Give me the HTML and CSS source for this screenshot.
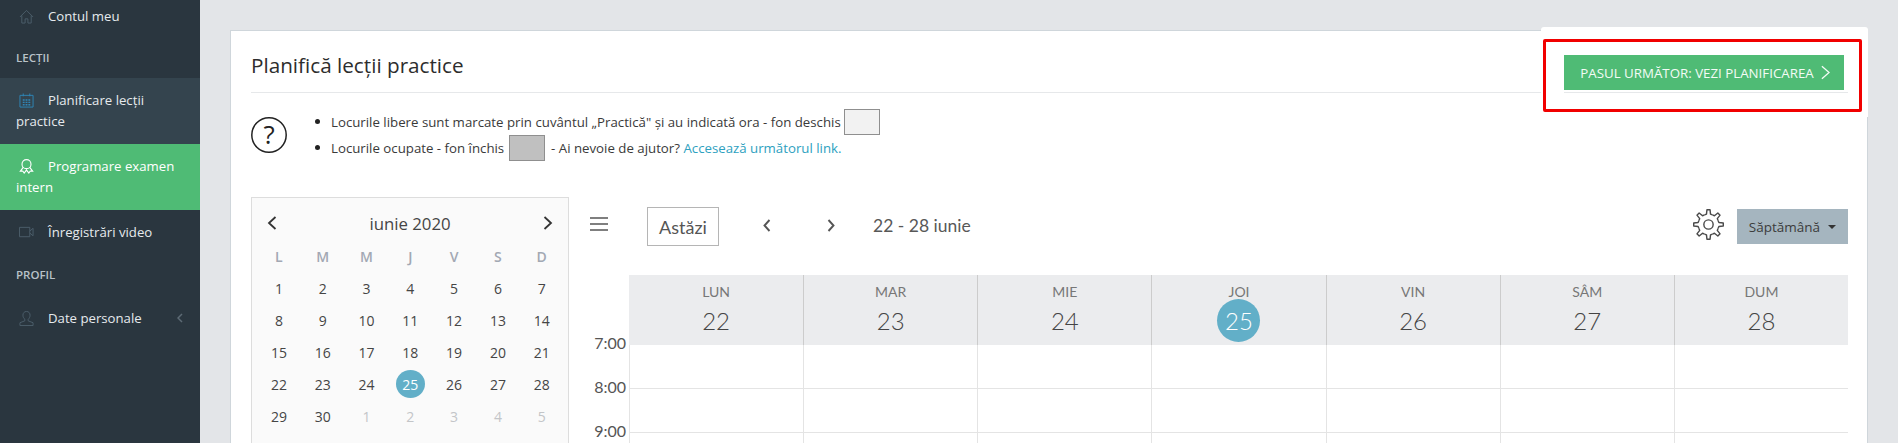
FILE: index.html
```html
<!DOCTYPE html>
<html lang="ro">
<head>
<meta charset="utf-8">
<title>Planifică lecții practice</title>
<link rel="stylesheet" href="styles.css">
</head>
<body>
<div class="app">
  <aside class="sidebar">
    <a class="nav-item first"><svg class="nav-icon dim" viewBox="0 0 16 16"><path d="M1 8.500 8 1.500l7 7M3 7v8h3.500v-4.500h3V15H13V7"/></svg>Contul meu</a>
    <div class="nav-heading">LECȚII</div>
    <a class="nav-item current"><svg class="nav-icon blue" viewBox="0 0 16 16"><path d="M1 2.500h14v12.500H1zM4.500 .5v3M11.500 .5v3"/><path class="dots" d="M4 7.500h2M7 7.500h2M10 7.500h2M4 10h2M7 10h2M10 10h2M4 12.500h2M7 12.500h2M10 12.500h2"/></svg>Planificare lecții practice</a>
    <a class="nav-item active"><svg class="nav-icon white" viewBox="0 0 16 16"><circle cx="8" cy="5.500" r="4.800"/><path d="M4.500 9 1.500 13l2.500-.2L5.500 15 7.500 12.500 8 11.500l.5 1L10.500 15l1.500-2.200 2.500.2-3-4"/></svg>Programare examen intern</a>
    <a class="nav-item"><svg class="nav-icon dim" viewBox="0 0 16 16"><path d="M.5 2.500h11v10H.5zM11.500 6.500l3.500-3v8l-3.500-3"/></svg>Înregistrări video</a>
    <div class="nav-heading profile">PROFIL</div>
    <a class="nav-item expand"><svg class="nav-icon dim" viewBox="0 0 16 16"><path d="M8 .5c2.500 0 3.800 1.800 3.800 4 0 2-1 3.500-2 4.300v1.700L15 12.500v3H1v-3l5.200-2V8.800c-1-.8-2-2.300-2-4.300 0-2.200 1.300-4 3.800-4z"/></svg>Date personale<svg class="nav-chevron" viewBox="0 0 6 10"><path d="M5 1 1 5l4 4"/></svg></a>
  </aside>
  <main class="main">
    <section class="card">
      <header class="card-head"><h1>Planifică lecții practice</h1></header>
      <div class="help">
        <svg class="help-icon" viewBox="0 0 36 36"><circle cx="18" cy="18" r="17.200"/><text x="18" y="27" text-anchor="middle">?</text></svg>
        <ul class="help-list">
          <li>Locurile libere sunt marcate prin cuvântul „Practică" și au indicată ora - fon deschis <span class="swatch light"></span></li>
          <li>Locurile ocupate - fon închis <span class="swatch dark"></span> - Ai nevoie de ajutor? <a class="help-link">Accesează următorul link.</a></li>
        </ul>
      </div>
      <div class="planner">
        <div class="mini">
          <div class="mini-head">
            <svg class="mini-arrow" viewBox="0 0 10 16"><path d="M8.500 2 2 8l6.500 6"/></svg>
            <span>iunie 2020</span>
            <svg class="mini-arrow" viewBox="0 0 10 16"><path d="M1.500 2 8 8l-6.500 6"/></svg>
          </div>
          <div class="mini-grid">
            <b>L</b><b>M</b><b>M</b><b>J</b><b>V</b><b>S</b><b>D</b>
            <span>1</span><span>2</span><span>3</span><span>4</span><span>5</span><span>6</span><span>7</span>
            <span>8</span><span>9</span><span>10</span><span>11</span><span>12</span><span>13</span><span>14</span>
            <span>15</span><span>16</span><span>17</span><span>18</span><span>19</span><span>20</span><span>21</span>
            <span>22</span><span>23</span><span>24</span><span><i class="today">25</i></span><span>26</span><span>27</span><span>28</span>
            <span>29</span><span>30</span><span class="off">1</span><span class="off">2</span><span class="off">3</span><span class="off">4</span><span class="off">5</span>
          </div>
        </div>
        <div class="cal">
          <div class="toolbar">
            <svg class="burger" viewBox="0 0 18 14"><path d="M0 1h18M0 7h18M0 13h18"/></svg>
            <button class="today-btn">Astăzi</button>
            <svg class="tool-arrow prev" viewBox="0 0 8 13"><path d="M6.500 1 1.500 6.500l5 5.500"/></svg>
            <svg class="tool-arrow next" viewBox="0 0 8 13"><path d="M1.500 1l5 5.500-5 5.500"/></svg>
            <span class="range">22 - 28 iunie</span>
            <svg class="gear" viewBox="0 0 24 24">
              <defs><path id="tooth" d="M-3.060-7.390-1.560-8.050-1.200-11.440H1.200L1.560-8.050 3.060-7.390"/></defs>
              <g transform="translate(12 12)">
                <use href="#tooth"/>
                <use href="#tooth" transform="rotate(45)"/>
                <use href="#tooth" transform="rotate(90)"/>
                <use href="#tooth" transform="rotate(135)"/>
                <use href="#tooth" transform="rotate(180)"/>
                <use href="#tooth" transform="rotate(225)"/>
                <use href="#tooth" transform="rotate(270)"/>
                <use href="#tooth" transform="rotate(315)"/>
                <circle r="3.600"/>
              </g>
            </svg>
            <button class="view-btn">Săptămână<i class="caret"></i></button>
          </div>
          <div class="week">
            <div class="gutter"><div>7:00</div><div>8:00</div><div>9:00</div></div>
            <div class="days">
              <div class="day"><small>LUN</small><strong>22</strong></div>
              <div class="day"><small>MAR</small><strong>23</strong></div>
              <div class="day"><small>MIE</small><strong>24</strong></div>
              <div class="day"><small>JOI</small><strong class="now">25</strong></div>
              <div class="day"><small>VIN</small><strong>26</strong></div>
              <div class="day"><small>SÂM</small><strong>27</strong></div>
              <div class="day"><small>DUM</small><strong>28</strong></div>
              <i></i><i></i><i></i><i></i><i></i><i></i><i></i>
              <i></i><i></i><i></i><i></i><i></i><i></i><i></i>
              <i></i><i></i><i></i><i></i><i></i><i></i><i></i>
            </div>
          </div>
        </div>
      </div>
    </section>
  </main>
</div>
<div class="popover"></div>
<div class="highlight"></div>
<button class="next-step">PASUL URMĂTOR: VEZI PLANIFICAREA<svg viewBox="0 0 10 16"><path d="M1 1l8 7-8 7"/></svg></button>
</body>
</html>
```
FILE: styles.css
```css
* { box-sizing: border-box; }
html, body { margin: 0; height: 443px; overflow: hidden; }
body { font-family: "Open Sans", sans-serif; color: #333; background: #e3e5e8; position: relative; }
.app { display: flex; height: 443px; }
.sidebar { width: 200px; flex: none; background: #2a363f; color: #e6eaed; font-size: 13.200px; line-height: 21px; }
.nav-item { display: block; padding: 12px 16px; position: relative; }
.nav-item.first { padding-top: 6px; padding-bottom: 21px; }
.nav-item.current { background: #34444e; }
.nav-item.active { background: #4fbb75; color: #fff; }
.nav-item.expand { padding-top: 23px; }
.nav-icon { width: 15px; height: 15px; margin: 0 14px 0 3px; vertical-align: -3px; fill: none; stroke: #4d5f6c; stroke-width: 1; }
.nav-icon.blue { stroke: #2f86b8; }
.nav-icon.white { stroke: #fff; stroke-width: 1.200; }
.nav-icon .dots { stroke-width: 1.500; }
.nav-chevron { position: absolute; right: 17px; top: 28px; width: 6px; height: 10px; fill: none; stroke: #5d6b75; stroke-width: 1.500; }
.nav-heading { font-size: 11.500px; font-weight: 600; color: #b9c2c8; padding: 0 16px 10px; line-height: 20px; }
.nav-heading.profile { padding-top: 10px; padding-bottom: 0; }
.main { flex: 1; padding: 30px 30px 0; min-width: 0; }
.card { background: #fff; border: 1px solid #cfd6db; border-bottom: 0; height: 413px; padding: 0 19px 0 20px; overflow: hidden; }
.card-head { height: 62px; border-bottom: 1px solid #e6e8ea; display: flex; align-items: center; padding-top: 6px; }
.card-head h1 { margin: 0; font-size: 20.700px; font-weight: 500; color: #2d2d2d; line-height: 28px; }
.help { display: flex; align-items: center; height: 52px; margin-top: 16px; }
.help-icon { width: 36px; height: 36px; flex: none; fill: none; stroke: #222; stroke-width: 1.500; }
.help-icon text { font-family: "Open Sans", sans-serif; font-size: 26px; fill: #222; stroke: none; }
.help-list { margin: 0; padding: 0 0 0 44px; list-style: none; font-size: 13.250px; line-height: 26px; color: #3a3a3a; }
.help-list li { height: 26px; display: flex; align-items: center; white-space: pre; position: relative; }
.help-list li::before { content: ""; position: absolute; left: -16px; top: 10px; width: 5px; height: 5px; border-radius: 50%; background: #222; }
.help-link { color: #2ea1c0; }
.swatch { display: inline-block; width: 36px; height: 26px; border: 1px solid #8f8f8f; }
.swatch.light { background: #f2f2f2; }
.swatch.dark { background: #c0c0c0; margin: 0 3px 0 1px; }
.planner { display: flex; margin-top: 36px; }
.mini { width: 318px; flex: none; height: 260px; background: #fafafa; border: 1px solid #dddddd; padding: 10px 5px 0; }
.mini-head { display: flex; align-items: center; justify-content: space-between; height: 30px; padding: 0 10px 0 10px; font-size: 16.800px; color: #454545; }
.mini-arrow { width: 10px; height: 16px; fill: none; stroke: #333; stroke-width: 1.800; }
.mini-grid { display: grid; grid-template-columns: repeat(7, 43.800px); grid-auto-rows: 32px; margin: 2px 0 0; font-size: 14px; color: #454545; }
.mini-grid > * { display: flex; align-items: center; justify-content: center; font-weight: 400; }
.mini-grid b { font-weight: 600; color: #a2a8b3; }
.mini-grid .off { color: #c3c5c8; }
.today { font-style: normal; width: 29px; height: 28px; border-radius: 50%; background: #62afc8; color: #fff; display: flex; align-items: center; justify-content: center; }
.cal { flex: 1; min-width: 0; margin-left: 2px; font-family: Lato, sans-serif; }
.toolbar { display: flex; align-items: center; height: 39px; margin-top: 10px; margin-left: 19px; position: relative; }
.burger { width: 18px; height: 14px; fill: none; stroke: #555; stroke-width: 1.300; margin-top: -6px; }
.today-btn { width: 72px; height: 39px; margin-left: 39px; background: #fff; border: 1px solid #b5b5b5; border-radius: 0; font: 18px Lato, sans-serif; color: #555; padding: 0; }
.tool-arrow { width: 8px; height: 13px; fill: none; stroke: #555; stroke-width: 1.900; margin-top: -3px; }
.tool-arrow.prev { margin-left: 44px; }
.tool-arrow.next { margin-left: 56px; }
.range { margin-left: 38px; font-size: 17.500px; color: #585858; margin-top: -2px; }
.gear { width: 31px; height: 31px; margin-left: auto; fill: none; stroke: #4a4a4a; stroke-width: 1.100; stroke-linejoin: round; margin-top: -5px; }
.view-btn { width: 111px; height: 35px; margin-left: 13px; background: #a5b5bf; border: 0; font: 13.500px "Open Sans", sans-serif; color: #3c3c3c; padding: 0; display: flex; align-items: center; justify-content: center; }
.caret { width: 0; height: 0; margin-left: 8px; border: 4px solid transparent; border-top-color: #333; border-bottom: 0; }
.week { display: flex; margin-top: 29px; }
.gutter { width: 58px; flex: none; padding-top: 57px; padding-right: 3px; text-align: right; font-size: 16px; color: #555; }
.gutter div { height: 44px; line-height: 22px; }
.days { flex: 1; display: grid; grid-template-columns: repeat(7, 1fr); grid-template-rows: 70px 44px 44px auto; height: 168px; }
.day { background: #ebecee; text-align: center; color: #777; border-left: 1px solid #ccc; display: flex; flex-direction: column; align-items: center; position: relative; }
.day:first-child { border-left: 0; }
.day small { font-size: 14px; line-height: 18px; margin-top: 8px; }
.day strong { font-weight: 300; font-size: 24px; line-height: 30px; margin-top: 5px; color: #444; }
.day strong.now { position: absolute; top: 24px; width: 43px; height: 43px; line-height: 43px; border-radius: 50%; background: #62afc8; color: #fff; margin: 0; }
.days > i { border-left: 1px solid #e4e4e4; border-bottom: 1px solid #e4e4e4; }
.days > i:nth-last-child(-n+7) { border-bottom: 0; }
.popover { position: absolute; left: 1541px; top: 27px; width: 327px; height: 90px; background: #fff; border-radius: 3px 3px 0 0; }
.popover::after { content: ""; position: absolute; left: 23px; right: 20px; top: 65px; border-top: 1px solid #e6e8ea; }
.highlight { position: absolute; left: 1543px; top: 39px; width: 319px; height: 73px; border: 3px solid #f10000; border-radius: 2px; }
.next-step { position: absolute; left: 1564px; top: 55px; width: 280px; height: 35px; background: #4fbb75; border: 0; padding: 0 0 0 2px; color: #f4fbf6; font: 13.300px "Open Sans", sans-serif; display: flex; align-items: center; justify-content: center; white-space: pre; }
.next-step svg { width: 9px; height: 15px; margin-left: 7px; fill: none; stroke: #f4fbf6; stroke-width: 1.500; }
```
